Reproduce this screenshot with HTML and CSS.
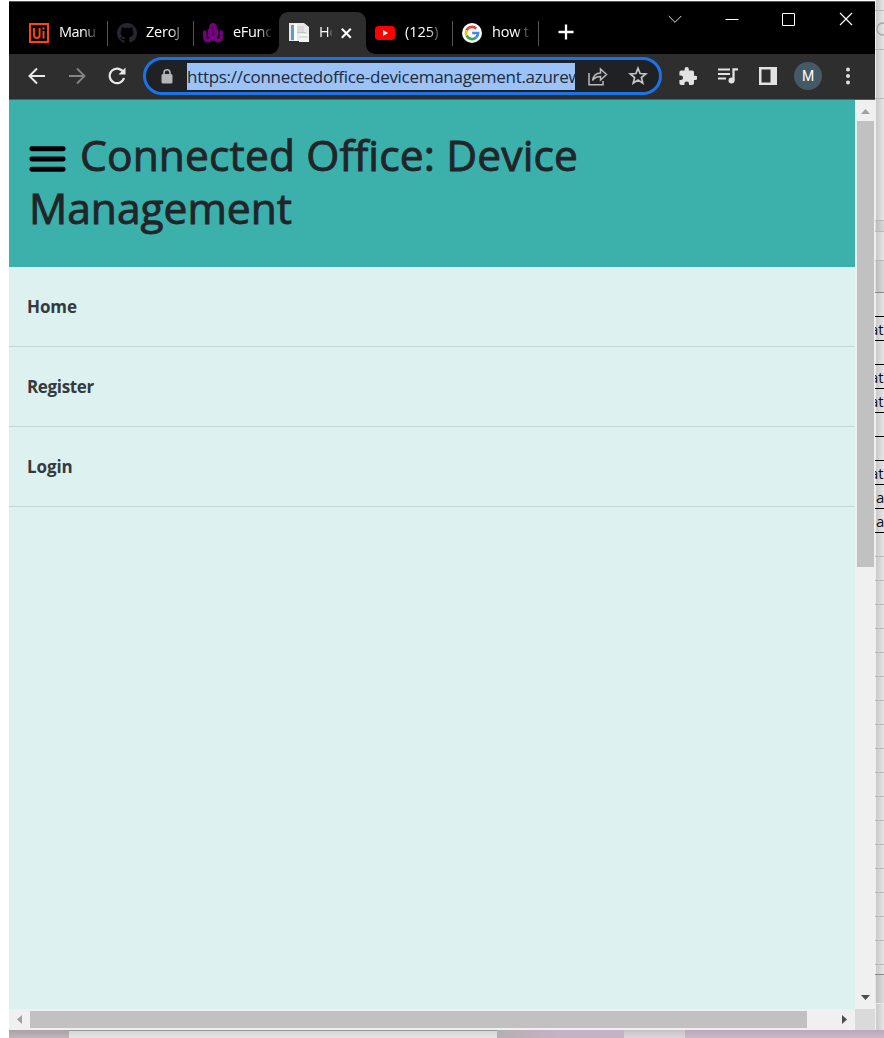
FILE: index.html
```
<!DOCTYPE html>
<html lang="en">
<head>
<meta charset="utf-8">
<title>Connected Office: Device Management</title>
<link rel="stylesheet" href="styles.css">
</head>
<body>
<div class="desktop">
<div class="upper">
<main class="window">
  <header class="tabstrip">
    <div class="tabs">
      <div class="tab sep"><svg class="fav" viewBox="0 0 20 20"><rect x="1" y="1" width="18" height="18" fill="#060302" stroke="#fa4616" stroke-width="2"/><path d="M5 5v7q0 3 2.800 3t2.800-3V5M14.500 8v7.500M14.500 4.500v2" fill="none" stroke="#fa4616" stroke-width="1.900"/></svg><span class="label t1">Manu</span></div>
      <div class="tab sep"><svg class="fav" viewBox="0 0 16 16"><path fill="#24292f" d="M8 0C3.580 0 0 3.580 0 8c0 3.540 2.290 6.530 5.470 7.590.4.070.55-.17.55-.38 0-.19-.01-.82-.01-1.490-2.010.37-2.530-.49-2.690-.94-.09-.23-.48-.94-.82-1.130-.28-.15-.68-.52-.01-.53.63-.01 1.080.58 1.230.82.72 1.210 1.870.87 2.330.66.07-.52.28-.87.51-1.070-1.780-.2-3.640-.89-3.640-3.950 0-.87.31-1.590.82-2.150-.08-.2-.36-1.020.08-2.120 0 0 .67-.21 2.200.82A7.600 7.600 0 0 1 8 3.860c.68 0 1.360.09 2 .27 1.530-1.040 2.200-.82 2.200-.82.44 1.100.16 1.920.08 2.120.51.56.82 1.270.82 2.150 0 3.070-1.870 3.750-3.650 3.950.29.25.54.73.54 1.480 0 1.070-.01 1.930-.01 2.200 0 .21.15.46.55.38A8.010 8.010 0 0 0 16 8c0-4.420-3.580-8-8-8z"/></svg><span class="label t2">ZeroJ</span></div>
      <div class="tab"><svg class="fav" viewBox="0 0 20 20"><path d="M1.800 7.500V14q0 3.700 3 3.700t3-3.700V5q0-3.200 2.200-3.200T12.200 5v9q0 3.700 3 3.700t3-3.700V7.500" fill="none" stroke="#760080" stroke-width="3.400"/><path d="M5.800 6v8M10 6v12M14.200 6v8" stroke="#760080" stroke-width="2"/><path d="M4.500 6v8M10 5v8M15.500 6v8" stroke="#2c0030" stroke-width=".8"/></svg><span class="label t3">eFunc</span></div>
      <div class="tab active"><svg class="fav" viewBox="0 0 20 20"><path d="M0 0h15l5 4v14H0z" fill="#e5e9ec"/><path d="M2 2h3v15H2z" fill="#5a9fc9"/><path d="M5 1h3v17H5z" fill="#fff"/><path d="M8 3h7v6H8z" fill="#d5d9dc"/><path d="M10 11h10v8H10z" fill="#f4f4f4"/><path d="M8 9.500h9M10 14h9" stroke="#bfc4c8"/></svg><span class="label t4">Ho</span><svg class="tabclose" viewBox="0 0 13 13"><path d="M1.800 1.800l9 9M10.800 1.800l-9 9" stroke="#fff" stroke-width="2"/></svg></div>
      <div class="tab sep"><svg class="fav" viewBox="0 0 20 20"><rect y="3" width="20" height="14" rx="3.500" fill="#f00"/><path d="M8 7l5 3-5 3z" fill="#fff"/></svg><span class="label t5">(125)</span></div>
      <div class="tab sep"><svg class="fav" viewBox="0 0 20 20"><circle cx="10" cy="10" r="10" fill="#fff"/><g fill="none" stroke-width="2.700"><path d="M14.200 5.600A6 6 0 0 0 4.600 7.300" stroke="#ea4335"/><path d="M4.600 7.300a6 6 0 0 0 0 5.400" stroke="#fbbc05"/><path d="M4.600 12.700A6 6 0 0 0 14 14.500" stroke="#34a853"/><path d="M14 14.500A6 6 0 0 0 16 10H10.200" stroke="#4285f4"/></g></svg><span class="label t6">how t</span></div>
    </div>
    <svg class="plus" viewBox="0 0 16 16"><path d="M8 .5v15M.5 8h15" stroke="#fff" stroke-width="2.300"/></svg>
    <div class="controls">
      <svg viewBox="0 0 14 14"><path d="M.7 4L7 10.300 13.300 4" fill="none" stroke="#ddd"/></svg>
      <svg viewBox="0 0 14 14"><path d="M.5 7.500h13" stroke="#fff"/></svg>
      <svg viewBox="0 0 14 14"><path d="M.5 1.500h12v12H.5z" fill="none" stroke="#fff"/></svg>
      <svg viewBox="0 0 14 14"><path d="M1 1l12 12M13 1L1 13" stroke="#fff" stroke-width="1.200"/></svg>
    </div>
  </header>
  <div class="toolbar">
    <div class="nav">
      <svg viewBox="0 0 18 18"><path d="M17 9H2M9 1.500L1.500 9 9 16.500" fill="none" stroke="#e8e8e8" stroke-width="2"/></svg>
      <svg viewBox="0 0 18 18"><path d="M1 9h15M9 1.500L16.500 9 9 16.500" fill="none" stroke="#858585" stroke-width="1.800"/></svg>
      <svg viewBox="0 0 18 18"><path d="M15.200 5A7.300 7.300 0 1 0 16 11" fill="none" stroke="#e8e8e8" stroke-width="2.200"/><path d="M17.500.5V7.500h-7z" fill="#e8e8e8"/></svg>
    </div>
    <div class="omnibox">
      <svg class="lock" viewBox="0 0 12 15"><rect x=".5" y="5" width="11" height="9.500" rx="1.500" fill="#b4b6b9"/><path d="M3 5.500V3.800a3 3 0 0 1 6 0v1.700" fill="none" stroke="#b4b6b9" stroke-width="1.600"/></svg>
      <div class="url"><span>https://connectedoffice-devicemanagement.azurew</span></div>
      <svg class="share" viewBox="0 0 20 19"><path d="M1 6v11.800h14V14M4.500 13.500C5.500 8.300 8 6 12.500 6V2l6 5.500-6 5.500V9.600c-3.500 0-5.800 1-8 3.900z" fill="none" stroke="#b8babd" stroke-width="1.500"/></svg>
      <svg class="star" viewBox="0 0 20 20"><path d="M10 2.200l2.100 5.300 5.700.4-4.400 3.700 1.400 5.500L10 14.100l-4.800 3 1.400-5.500L2.200 7.900l5.700-.4z" fill="none" stroke="#c4c6c8" stroke-width="1.700"/></svg>
    </div>
    <svg class="puzzle" viewBox="1.500 1 21 22"><path fill="#e2e2e2" d="M20.500 11H19V7a2 2 0 0 0-2-2h-4V3.500a2.500 2.500 0 0 0-5 0V5H4a2 2 0 0 0-2 2v3.800h1.500a2.700 2.700 0 0 1 0 5.400H2V20a2 2 0 0 0 2 2h3.800v-1.500a2.700 2.700 0 0 1 5.400 0V22H17a2 2 0 0 0 2-2v-4h1.500a2.500 2.500 0 0 0 0-5z"/></svg>
    <svg class="media" viewBox="0 0 20 18"><path d="M0 2.500h12M0 7h12M0 11.500h8" stroke="#e2e2e2" stroke-width="2"/><path d="M15.500 13.500V2.300H20" fill="none" stroke="#e2e2e2" stroke-width="2.300"/><circle cx="13.500" cy="13.500" r="3" fill="#e2e2e2"/></svg>
    <svg class="panel" viewBox="0 0 18 18"><path fill="#e2e2e2" fill-rule="evenodd" d="M0 0h18v18H0zM2.500 2.500v13h9v-13z"/></svg>
    <div class="avatar">M</div>
    <svg class="dots" viewBox="0 0 4 18"><g fill="#e2e2e2"><circle cx="2" cy="2.500" r="2"/><circle cx="2" cy="9" r="2"/><circle cx="2" cy="15.500" r="2"/></g></svg>
  </div>
  <div class="content">
    <div class="page">
      <div class="banner"><h1><svg class="burger" viewBox="0 0 36 27"><path d="M2.700 3.500h30.600M2.700 13.500h30.600M2.700 23.500h30.600" stroke="#000" stroke-width="4.700" stroke-linecap="round"/></svg><span class="line1">Connected Office: Device</span><br><span class="line2">Management</span></h1></div>
      <nav class="menu"><a class="m1">Home</a><a class="m2">Register</a><a class="m3">Login</a></nav>
    </div>
    <div class="vbar"><svg viewBox="0 0 9 5"><path d="M0 5L4.500 0 9 5z" fill="#a0a0a0"/></svg><div class="vthumb"></div><svg class="down" viewBox="0 0 9 5"><path d="M0 0h9L4.500 5z" fill="#4d4d4d"/></svg></div>
  </div>
  <div class="hbar"><svg class="left" viewBox="0 0 5 9"><path d="M5 0v9L0 4.500z" fill="#a0a0a0"/></svg><div class="hthumb"></div><svg class="right" viewBox="0 0 5 9"><path d="M0 0v9l5-4.500z" fill="#4d4d4d"/></svg><div class="corner"></div></div>
</main>
<aside class="sheet">
  <div class="h11"></div><div class="h39"><svg viewBox="0 0 8 14"><circle cx="7" cy="7" r="6" fill="none" stroke="#a5a5a5" stroke-width="1.300"/></svg></div><div class="h49"></div><div class="h122"></div><div class="h11 dim"></div><div class="h29"></div><div class="h32 dim"></div>
  <div class="row k"></div><div class="row k cut">at</div><div class="row k"></div><div class="row k cut">at</div><div class="row k cut">at</div><div class="row k"></div><div class="row k"></div><div class="row k cut">at</div><div class="row k">a</div><div class="row k">a</div>
  <div class="row"></div><div class="row"></div><div class="row"></div><div class="row"></div><div class="row"></div><div class="row"></div><div class="row"></div><div class="row"></div><div class="row"></div><div class="row"></div><div class="row"></div><div class="row"></div><div class="row"></div><div class="row"></div><div class="row"></div><div class="row"></div><div class="row"></div><div class="row"></div>
  <div class="h10"></div><div class="h29 foot"></div>
</aside>
</div>
<footer class="behind"><i class="b1"></i><i class="b2"></i><i class="b3"></i><i class="b4"></i><i class="b5"></i></footer>
</div>
</body>
</html>
```
FILE: styles.css
```
* { box-sizing: border-box; }
body { margin: 0; background: #fff; font-family: "Open Sans", "Noto Sans", sans-serif; overflow: hidden; }
svg { display: block; flex: none; }
.desktop { width: 884px; height: 1038px; padding-left: 9px; overflow: hidden; }
.upper { display: flex; height: 1030px; }
.window { width: 866px; height: 1030px; padding-top: 1px; flex: none; }

.tabstrip { height: 53px; background: #000; border-top: 1px solid #555; display: flex; padding-left: 12px; }
.tabs { display: flex; padding-top: 10px; height: 52px; }
.tab { width: 86px; height: 42px; display: flex; align-items: center; padding-left: 8px; position: relative; }
.tab.sep::after { content: ""; position: absolute; right: -1px; top: 9px; width: 1px; height: 25px; background: #555; }
.tab.active { width: 87px; background: #2e2e2e; border-radius: 9px 9px 0 0; padding-left: 10px; }
.tab.active::before, .tab.active::after { content: ""; position: absolute; bottom: 0; width: 9px; height: 9px; }
.tab.active::before { left: -9px; background: radial-gradient(circle at 0 0, #000 8.500px, #2e2e2e 9px); }
.tab.active::after { right: -9px; background: radial-gradient(circle at 100% 0, #000 8.500px, #2e2e2e 9px); }
.fav { width: 20px; height: 20px; }
.tab:nth-child(n+2) .fav { margin-left: 2px; }
.tab.active .fav { margin-left: 0; }
.tab:nth-child(n+5) .fav { margin-left: 1px; }
.tab:nth-child(6) .fav { margin-left: 2px; }
.label { margin: 0 0 2px 9px; width: 38px; overflow: hidden; white-space: nowrap; color: #fff; font-size: 14.5px; letter-spacing: -.2px; line-height: 22px; -webkit-mask-image: linear-gradient(90deg, #000 65%, transparent 105%); mask-image: linear-gradient(90deg, #000 65%, transparent 105%); }
.tab:first-child .label { margin-left: 10px; letter-spacing: -.6px; }
.tab .t3 { margin-left: 10px; letter-spacing: -.3px; }
.tab .t4 { width: 13px; margin-left: 10px; }
.tab .t5 { width: 36px; margin-left: 10px; letter-spacing: 0; }
.tab .t6 { width: 37px; margin-left: 10px; }
.tabclose { width: 13px; height: 13px; margin-left: 8px; }
.plus { width: 16px; height: 16px; margin: 22px 0 0 20px; }
.controls { display: flex; gap: 43px; margin: 10px 0 0 94px; }
.controls svg { width: 14px; height: 14px; }

.toolbar { height: 46px; background: #2e2e2e; border-bottom: 1px solid #5a5a5a; display: flex; align-items: center; padding: 0 0 1px 19px; }
.nav { display: flex; gap: 22px; width: 115px; }
.nav svg { width: 18px; height: 18px; }
.omnibox { width: 519px; height: 38px; border: 3px solid #1b73e8; border-radius: 19px; background: #202124; display: flex; align-items: center; padding-left: 15px; }
.lock { width: 12px; height: 15px; }
.url { width: 388px; height: 27px; margin-left: 14px; background: #9bc3f7; color: #202a3c; font-size: 17px; letter-spacing: -.29px; line-height: 28px; overflow: hidden; white-space: nowrap; }
.share { width: 20px; height: 19px; margin-left: 13px; }
.star { width: 20px; height: 20px; margin-left: 20px; }
.puzzle { width: 18px; height: 19px; margin-left: 17px; }
.media { width: 20px; height: 18px; margin-left: 21px; }
.panel { width: 18px; height: 18px; margin-left: 21px; }
.avatar { width: 28px; height: 28px; margin-left: 17px; border-radius: 50%; background: #455a64; color: #fff; font: 14px/28px Roboto, sans-serif; text-align: center; flex: none; }
.dots { width: 4px; height: 18px; margin-left: 24px; }

.content { display: flex; height: 909px; }
.page { width: 846px; background: #ddf1f0; }
.banner { height: 167px; background: #3cb0ab; padding: 28px 20px 0; }
h1 { margin: 0; font-size: 42.5px; font-weight: 500; line-height: 53px; color: #212529; white-space: nowrap; -webkit-text-stroke: .9px #212529; }
.burger { display: inline-block; width: 37px; height: 28px; vertical-align: -2px; margin-right: 14px; }
.line1 { letter-spacing: .15px; }
.menu { display: flex; flex-direction: column; }
.menu a { height: 80px; padding-left: 18px; line-height: 79px; border-bottom: 1px solid #c5d8d8; font-size: 17px; font-weight: 700; letter-spacing: -.1px; color: #343a40; }
.menu .m2 { letter-spacing: -.35px; }
.vbar { width: 20px; background: #f0f0f0; display: flex; flex-direction: column; align-items: center; padding-top: 9px; }
.vbar svg { width: 9px; height: 5px; }
.vthumb { width: 17px; height: 446px; margin-top: 7px; background: #c1c1c1; }
.vbar .down { margin-top: 428px; }
.hbar { height: 21px; background: #f0f0f0; display: flex; align-items: center; padding-left: 8px; }
.hbar svg { width: 5px; height: 9px; }
.hthumb { width: 777px; height: 17px; margin-left: 8px; background: #c1c1c1; }
.hbar .right { margin-left: 35px; }
.corner { width: 20px; height: 21px; margin-left: 8px; background: #dadada; }

.sheet { width: 9px; flex: none; background: linear-gradient(90deg, #f0f0f0 0 1px, #c9c9c9 1px, #e5e5e5 9px); overflow: hidden; }
.sheet div { border-bottom: 1px solid #b9b9b9; }
.sheet .row { height: 24px; padding-left: 1px; font-size: 15px; line-height: 25px; color: #111; white-space: nowrap; overflow: hidden; }
.sheet .row.k { border-color: #000; }
.sheet .row.cut { text-indent: -6px; }
.h10 { height: 10px; border-color: #888 !important; }
.h11 { height: 11px; }
.h39 { height: 39px; padding: 11px 0 0 1px; }
.h39 svg { width: 8px; height: 14px; }
.h49 { height: 49px; }
.h122 { height: 122px; }
.h29 { height: 29px; }
.h32 { height: 32px; border-color: #888 !important; }
.dim { background: rgba(0, 0, 0, .06); }
.sheet .foot { background: rgba(0, 0, 0, .04); border-color: #e8e8e8; }

.behind { display: flex; height: 8px; }
.behind i { height: 8px; background: linear-gradient(#aaa1a6, #bdb6ba); }
.b1 { width: 60px; }
.behind .b2 { width: 428px; background: linear-gradient(#999 0 1px, #d6d6d6 1px, #e5e5e5); }
.behind .b3 { width: 127px; background: linear-gradient(90deg, #b5afb2, #c4b3c4 50%); }
.behind .b4 { width: 61px; background: linear-gradient(#c8c1c7, #dcd5db); }
.behind .b5 { width: 199px; background: linear-gradient(#b9a8b8, #ccb9cb); }
```
